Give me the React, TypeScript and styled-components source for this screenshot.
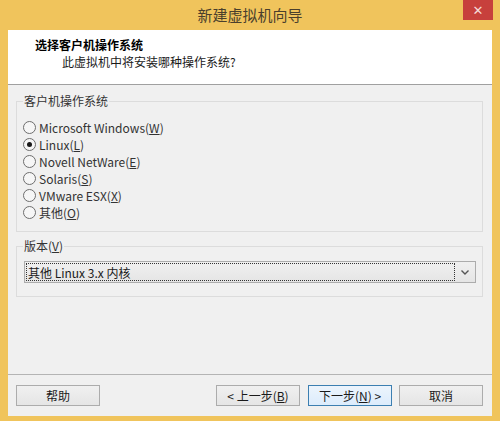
import React from "react";
import styled, { createGlobalStyle } from "styled-components";

const Global = createGlobalStyle`
  html, body { margin: 0; padding: 0; }
  body {
    width: 500px; height: 421px; overflow: hidden;
    background: #f0c45c;
    font-family: "Noto Sans CJK SC", "Noto Sans", sans-serif;
    font-size: 12px;
    color: #1e1e1e;
  }
`;

const Window = styled.div`
  width: 500px; height: 421px;
  box-sizing: border-box;
  background: #f0c45c;
  display: flex; flex-direction: column;
  padding: 0 8px 5px 8px;
  position: relative;
`;

const TitleBar = styled.div`
  height: 30px;
  display: flex; align-items: center; justify-content: center;
  padding-bottom: 2px;
  box-sizing: border-box;
  font-family: "Noto Sans CJK SC", sans-serif;
  font-size: 15px;
  color: #4a3f2c;
`;

const CloseBtn = styled.div`
  position: absolute; top: 0; right: 7px;
  width: 30px; height: 20px;
  background: #c7403c;
  display: flex; align-items: center; justify-content: center;
  color: #f5d9d6; font-size: 13px; font-weight: bold;
  font-family: "DejaVu Sans", sans-serif;
`;

const Client = styled.div`
  flex: 1;
  background: #f0f0f0;
  display: flex; flex-direction: column;
`;

const Header = styled.div`
  height: 54px;
  background: #ffffff;
  border-bottom: 1px solid #a0a0a0;
  box-sizing: content-box;
  padding-left: 27px;
  display: flex; flex-direction: column;
  justify-content: flex-start;
  font-family: "Noto Sans CJK SC", sans-serif;
`;

const HeaderTitle = styled.div`
  margin-top: 6px;
  font-weight: bold; font-size: 12px; line-height: 17px;
  color: #000;
`;

const HeaderSub = styled.div`
  font-size: 12px; line-height: 17px;
  padding-left: 27px;
  color: #1a1a1a;
`;

const Body = styled.div`
  flex: 1;
  padding: 9px 9px 0 8px;
  display: flex; flex-direction: column;
`;

const Group = styled.fieldset<{ $h: number }>`
  margin: 0;
  height: ${(p) => p.$h}px;
  box-sizing: border-box;
  border: 1px solid #dcdcdc;
  padding: 0 0 0 6px;
  min-width: 0;
`;

const Legend = styled.legend`
  padding: 0 1px;
  margin-left: 0;
  font-size: 12px; line-height: 14px;
  color: #333;
`;

const RadioList = styled.div`
  display: flex; flex-direction: column;
  margin-top: 11px;
`;

const RadioRow = styled.label`
  height: 17px;
  display: flex; align-items: center;
  gap: 3px;
  color: #333;
`;

const RadioCircle = styled.span<{ $on?: boolean }>`
  width: 11px; height: 11px;
  border-radius: 50%;
  border: 1px solid #6e6e6e;
  background: #f6f6f6;
  display: flex; align-items: center; justify-content: center;
  &::after {
    content: "";
    width: 5px; height: 5px; border-radius: 50%;
    background: #1a1a1a;
    display: ${(p) => (p.$on ? "block" : "none")};
  }
`;

const Gap = styled.div<{ $h: number }>`
  height: ${(p) => p.$h}px;
`;

const Combo = styled.div`
  margin: 8px 6px 0 1px;
  height: 22px;
  box-sizing: border-box;
  border: 1px solid #acacac;
  background: linear-gradient(#f0f0f0, #e5e5e5);
  display: flex; align-items: center;
  padding: 1px;
`;

const ComboText = styled.div`
  flex: 1;
  height: 100%;
  box-sizing: border-box;
  border: 1px dotted #333;
  display: flex; align-items: center;
  padding-left: 1px;
  color: #1a1a1a;
`;

const ComboArrow = styled.div`
  width: 19px;
  display: flex; align-items: center; justify-content: center;
`;

const Footer = styled.div`
  margin-top: auto;
  border-top: 1px solid #b4b4b4;
  height: 42px;
  box-sizing: border-box;
  padding: 10px 8px 0 8px;
  display: flex;
`;

const Button = styled.div<{ $def?: boolean; $ml?: number }>`
  width: 84px; height: 21px;
  box-sizing: border-box;
  margin-left: ${(p) => p.$ml ?? 0}px;
  border: 1px solid ${(p) => (p.$def ? "#3c7fb1" : "#acacac")};
  background: ${(p) => (p.$def ? "linear-gradient(#ecf4fc, #dcecfc)" : "linear-gradient(#f0f0f0, #e5e5e5)")};
  display: flex; align-items: center; justify-content: center;
  font-size: 12px;
  color: #1a1a1a;
`;

const items: { label: string; key: string; on?: boolean }[] = [
  { label: "Microsoft Windows", key: "W" },
  { label: "Linux", key: "L", on: true },
  { label: "Novell NetWare", key: "E" },
  { label: "Solaris", key: "S" },
  { label: "VMware ESX", key: "X" },
  { label: "其他", key: "O" },
];

export default function App() {
  return (
    <>
      <Global />
      <Window>
        <TitleBar>新建虚拟机向导</TitleBar>
        <CloseBtn>✕</CloseBtn>
        <Client>
          <Header>
            <HeaderTitle>选择客户机操作系统</HeaderTitle>
            <HeaderSub>此虚拟机中将安装哪种操作系统?</HeaderSub>
          </Header>
          <Body>
            <Group $h={138}>
              <Legend>客户机操作系统</Legend>
              <RadioList>
                {items.map((it) => (
                  <RadioRow key={it.key}>
                    <RadioCircle $on={it.on} />
                    <span>
                      {it.label}(<u>{it.key}</u>)
                    </span>
                  </RadioRow>
                ))}
              </RadioList>
            </Group>
            <Gap $h={7} />
            <Group $h={58}>
              <Legend>
                版本(<u>V</u>)
              </Legend>
              <Combo>
                <ComboText>其他 Linux 3.x 内核</ComboText>
                <ComboArrow>
                  <svg width="8" height="5" viewBox="0 0 8 5">
                    <path d="M0.5 0.5 L4 4 L7.5 0.5" fill="none" stroke="#555" strokeWidth="1.4" />
                  </svg>
                </ComboArrow>
              </Combo>
            </Group>
          </Body>
          <Footer>
            <Button>帮助</Button>
            <Button $ml={116}>
              &lt; 上一步(<u>B</u>)
            </Button>
            <Button $def $ml={8}>
              下一步(<u>N</u>) &gt;
            </Button>
            <Button $ml={7}>取消</Button>
          </Footer>
        </Client>
      </Window>
    </>
  );
}
